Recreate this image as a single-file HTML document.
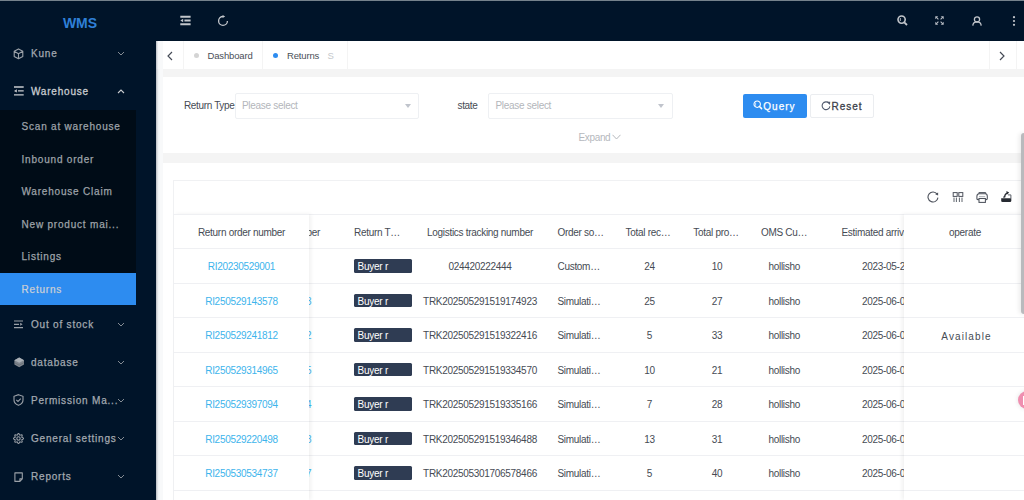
<!DOCTYPE html>
<html><head><meta charset="utf-8">
<style>
*{margin:0;padding:0;box-sizing:border-box}
html,body{width:1024px;height:500px;overflow:hidden;background:#f4f4f4;font-family:"Liberation Sans",sans-serif}
.abs{position:absolute}
#top{left:0;top:0;width:1024px;height:41px;background:#001429}
#topline{left:0;top:0;width:1024px;height:1px;background:#75828c}
#side{left:0;top:41px;width:156px;height:459px;background:#001429}
#logo{left:0;top:14px;width:160px;text-align:center;font-weight:bold;font-size:14px;color:#2f80d8;line-height:18px}
.mi{position:absolute;left:0;width:156px;height:38px;color:#a3a9b0;font-size:10px;letter-spacing:0.8px;line-height:38px;-webkit-text-stroke:0.25px #a3a9b0}
.mi .t{position:absolute;left:31px;top:0.7px}
.mi svg.ic{position:absolute;left:13px;top:13px}
.mi svg.ch{position:absolute;left:117px;top:16.7px}
#sub{left:0;top:110px;width:136px;height:195px;background:#000c17}
.si{position:absolute;left:0;width:136px;height:32.5px;line-height:32.5px;color:#9ea3a9;font-size:10px;letter-spacing:0.8px;-webkit-text-stroke:0.25px #9ea3a9}
.si .t{position:absolute;left:21.5px;top:1px}
#main{left:156px;top:41px;width:868px;height:459px;background:#f4f4f4}
#tabs{left:156px;top:41px;width:868px;height:28px;background:#fff}
.tdiv{position:absolute;top:41px;width:1px;height:28px;background:#f4f4f4}
.tt{position:absolute;top:41.5px;line-height:28px;font-size:9.5px;color:#4a4f58;letter-spacing:-0.15px}
#card1{left:163px;top:77px;width:861px;height:76px;background:#fff}
#card2{left:163px;top:163px;width:861px;height:337px;background:#fff}
.lbl{position:absolute;font-size:10px;letter-spacing:-0.35px;color:#464b54;line-height:12px}
.sel{position:absolute;top:93px;height:26px;border:1px solid #eef0f3;border-radius:2px;background:#fff}
.sel .ph{position:absolute;left:6.5px;top:0;line-height:24px;font-size:10px;letter-spacing:-0.3px;color:#b3b6bb}
.sel .car{position:absolute;top:10px;width:0;height:0;border-left:3.5px solid transparent;border-right:3.5px solid transparent;border-top:4px solid #c0c4cc}
.btn{position:absolute;top:94px;height:24px;border-radius:2px;font-size:10px;letter-spacing:1px;line-height:24px}
#tbl{left:173px;top:180px;width:851px;height:320px;border:1px solid #f0f1f3;border-right:none;border-bottom:none;background:#fff}
.hl{position:absolute;left:173px;width:851px;height:1px;background:#eff0f3}
.th{position:absolute;top:216px;line-height:34.5px;font-size:10px;letter-spacing:-0.3px;color:#464b54;white-space:nowrap}
.td{position:absolute;margin-top:1.5px;line-height:34.5px;font-size:10px;letter-spacing:-0.3px;color:#464b54;white-space:nowrap}
.lk{color:#3db4ec}
.tag{position:absolute;left:354px;width:58px;height:13.5px;background:#2f3c53;color:#fff;font-size:10px;letter-spacing:-0.25px;line-height:15.5px;padding-left:3.5px;border-radius:1.5px}
</style></head>
<body>
<div id="top" class="abs"></div>
<div id="topline" class="abs"></div>
<div id="side" class="abs"></div>
<div id="logo" class="abs">WMS</div>
<!-- header icons -->
<svg class="abs" style="left:179.5px;top:15px" width="11" height="11" viewBox="0 0 11 11">
 <path d="M0.3 1.75H10.6M4.4 5.5H10.6M0.3 9.25H10.6" stroke="#c3c7cc" stroke-width="1.8"/>
 <path d="M0.3 5.5L3.2 3.7V7.3Z" fill="#c3c7cc"/>
</svg>
<svg class="abs" style="left:216.5px;top:15px" width="12" height="12" viewBox="0 0 12 12">
 <path d="M6 1.5A4.4 4.4 0 1 0 10.4 5.9" stroke="#c3c7cc" stroke-width="1.3" fill="none"/>
 <path d="M5.6 0L8.2 1.5L5.6 3Z" fill="#c3c7cc"/>
</svg>
<svg class="abs" style="left:897px;top:15px" width="11" height="11" viewBox="0 0 11 11">
 <circle cx="4.6" cy="4.6" r="3.6" stroke="#c3c7cc" stroke-width="1.6" fill="none"/>
 <path d="M7.3 7.3L10 10" stroke="#c3c7cc" stroke-width="1.8"/>
 <path d="M3.3 3V6" stroke="#c3c7cc" stroke-width="0.9"/>
</svg>
<svg class="abs" style="left:935px;top:16px" width="9" height="9" viewBox="0 0 9 9"><path d="M3.4 3.4L1.2 1.2M5.6 3.4L7.8 1.2M3.4 5.6L1.2 7.8M5.6 5.6L7.8 7.8" stroke="#b9bec5" stroke-width="1.1"/><path d="M0.3 0.3H3.2L0.3 3.2ZM8.7 0.3H5.8L8.7 3.2ZM0.3 8.7H3.2L0.3 5.8ZM8.7 8.7H5.8L8.7 5.8Z" fill="#b9bec5"/></svg>
<svg class="abs" style="left:972px;top:16px" width="10" height="10" viewBox="0 0 10 10">
 <circle cx="5" cy="3.4" r="2.6" stroke="#c3c7cc" stroke-width="1.3" fill="none"/>
 <path d="M0.8 9.6C1 7 3 5.8 5 5.8S9 7 9.2 9.6" stroke="#c3c7cc" stroke-width="1.3" fill="none"/>
</svg>
<svg class="abs" style="left:1012px;top:16px" width="4" height="10" viewBox="0 0 4 10">
 <circle cx="2" cy="1.2" r="1.1" fill="#c3c7cc"/><circle cx="2" cy="5" r="1.1" fill="#c3c7cc"/><circle cx="2" cy="8.8" r="1.1" fill="#c3c7cc"/>
</svg>

<!-- sidebar menu -->
<div class="mi" style="top:34px">
 <svg class="ic" width="11" height="12" viewBox="0 0 11 12" style="left:12.5px;top:13.5px"><path d="M5.5 0.9L9.8 3.3V8.4L5.5 10.8L1.2 8.4V3.3Z M1.2 3.3L5.5 5.8L9.8 3.3 M5.5 5.8V10.8" stroke="#9ba1a8" stroke-width="1.1" fill="none" stroke-linejoin="round"/></svg>
 <span class="t">Kune</span>
 <svg class="ch" width="8" height="5" viewBox="0 0 8 5"><path d="M1 1L4 4L7 1" stroke="#858c94" stroke-width="1" fill="none"/></svg>
</div>
<div class="mi" style="top:72px;color:#c9ccd0;-webkit-text-stroke:0.3px #c9ccd0">
 <svg class="ic" width="11" height="10" viewBox="0 0 11 10" style="top:14px;left:13.5px"><path d="M0 1H9.7M4 4.9H9.7M0 8.8H9.7" stroke="#c9ccd0" stroke-width="1.3"/><path d="M0 4.9L2.8 3.2V6.6Z" fill="#c9ccd0"/></svg>
 <span class="t">Warehouse</span>
 <svg class="ch" width="8" height="5" viewBox="0 0 8 5" style="top:17px"><path d="M1 4L4 1L7 4" stroke="#c9ccd0" stroke-width="1.1" fill="none"/></svg>
</div>
<div id="sub" class="abs"></div>
<div class="si" style="top:110px"><span class="t">Scan at warehouse</span></div>
<div class="si" style="top:142.5px"><span class="t">Inbound order</span></div>
<div class="si" style="top:175px"><span class="t">Warehouse Claim</span></div>
<div class="si" style="top:207.5px"><span class="t">New product mai...</span></div>
<div class="si" style="top:240px"><span class="t">Listings</span></div>
<div class="si" style="top:272.5px;background:#2d8cf0;color:#e4eefb"><span class="t">Returns</span></div>

<div class="mi" style="top:305.5px">
 <svg class="ic" width="10" height="9" viewBox="0 0 10 9" style="left:14px;top:14.5px"><path d="M0 1H9M0 4.3H5M0 7.6H9" stroke="#9ba1a8" stroke-width="1.2"/><path d="M8.6 4.3L6.2 2.8V5.8Z" fill="#9ba1a8"/></svg>
 <span class="t">Out of stock</span>
 <svg class="ch" width="8" height="5" viewBox="0 0 8 5"><path d="M1 1L4 4L7 1" stroke="#858c94" stroke-width="1" fill="none"/></svg>
</div>
<div class="mi" style="top:343.5px">
 <svg class="ic" width="11" height="11" viewBox="0 0 11 11" style="top:13.5px;left:13.5px"><path d="M0.4 3.2L5.2 0.6L10 3.2V7.6L5.2 10.3L0.4 7.6Z" fill="#7f868e"/><path d="M0.4 3.2L5.2 0.6L10 3.2L5.2 5.8Z" fill="#aab0b6"/><path d="M0.4 5.6L5.2 8.2L10 5.6" stroke="#5d646c" stroke-width="0.6" fill="none"/></svg>
 <span class="t">database</span>
 <svg class="ch" width="8" height="5" viewBox="0 0 8 5"><path d="M1 1L4 4L7 1" stroke="#858c94" stroke-width="1" fill="none"/></svg>
</div>
<div class="mi" style="top:381.5px">
 <svg class="ic" width="11" height="12" viewBox="0 0 11 12" style="top:12.5px"><path d="M5.5 0.7L10 2.3V6C10 8.6 8 10.4 5.5 11.3C3 10.4 1 8.6 1 6V2.3Z" stroke="#9ba1a8" stroke-width="1.1" fill="none"/><path d="M3.3 5.8L5 7.4L7.8 4.6" stroke="#9ba1a8" stroke-width="1.1" fill="none"/></svg>
 <span class="t">Permission Ma...</span>
 <svg class="ch" width="8" height="5" viewBox="0 0 8 5"><path d="M1 1L4 4L7 1" stroke="#858c94" stroke-width="1" fill="none"/></svg>
</div>
<div class="mi" style="top:419.5px">
 <svg class="ic" width="11" height="11" viewBox="0 0 11 11" style="top:13px;left:13px"><path d="M10.55 5.50 L10.14 6.11 L9.29 6.52 L8.78 6.86 L8.90 7.46 L9.21 8.35 L9.07 9.07 L8.35 9.21 L7.46 8.90 L6.86 8.78 L6.52 9.29 L6.11 10.14 L5.50 10.55 L4.89 10.14 L4.48 9.29 L4.14 8.78 L3.54 8.90 L2.65 9.21 L1.93 9.07 L1.79 8.35 L2.10 7.46 L2.22 6.86 L1.71 6.52 L0.86 6.11 L0.45 5.50 L0.86 4.89 L1.71 4.48 L2.22 4.14 L2.10 3.54 L1.79 2.65 L1.93 1.93 L2.65 1.79 L3.54 2.10 L4.14 2.22 L4.48 1.71 L4.89 0.86 L5.50 0.45 L6.11 0.86 L6.52 1.71 L6.86 2.22 L7.46 2.10 L8.35 1.79 L9.07 1.93 L9.21 2.65 L8.90 3.54 L8.78 4.14 L9.29 4.48 L10.14 4.89Z" stroke="#9ba1a8" stroke-width="1.05" fill="none"/><circle cx="5.5" cy="5.5" r="1.7" stroke="#9ba1a8" stroke-width="1.1" fill="none"/></svg>
 <span class="t">General settings</span>
 <svg class="ch" width="8" height="5" viewBox="0 0 8 5"><path d="M1 1L4 4L7 1" stroke="#858c94" stroke-width="1" fill="none"/></svg>
</div>
<div class="mi" style="top:457.5px">
 <svg class="ic" width="10" height="11" viewBox="0 0 10 11" style="left:14px;top:14px"><path d="M0.9 0.9H8.3V6.8L5.9 9.4H0.9Z M8.3 6.8H5.9V9.4" stroke="#9ba1a8" stroke-width="1.1" fill="none" stroke-linejoin="round"/></svg>
 <span class="t">Reports</span>
 <svg class="ch" width="8" height="5" viewBox="0 0 8 5"><path d="M1 1L4 4L7 1" stroke="#858c94" stroke-width="1" fill="none"/></svg>
</div>

<!-- main -->
<div id="main" class="abs"></div>
<div id="tabs" class="abs"></div>
<div class="tdiv" style="left:183px"></div>
<div class="tdiv" style="left:262px"></div>
<div class="tdiv" style="left:347px"></div>
<div class="tdiv" style="left:988.5px"></div>
<div class="tdiv" style="left:1015.5px"></div>
<svg class="abs" style="left:166px;top:50.5px" width="8" height="10" viewBox="0 0 8 10"><path d="M6 1L2 5L6 9" stroke="#444a55" stroke-width="1.15" fill="none"/></svg>
<svg class="abs" style="left:998px;top:50.5px" width="8" height="10" viewBox="0 0 8 10"><path d="M2 1L6 5L2 9" stroke="#444a55" stroke-width="1.15" fill="none"/></svg>
<div class="abs" style="left:194px;top:52.5px;width:5px;height:5px;border-radius:50%;background:#d4d4d4"></div>
<div class="tt" style="left:207.5px">Dashboard</div>
<div class="abs" style="left:272.5px;top:52.5px;width:5px;height:5px;border-radius:50%;background:#2d8cf0"></div>
<div class="tt" style="left:287px">Returns</div>
<div class="tt" style="left:327.5px;color:#c5c8cc">S</div>

<div id="card1" class="abs"></div>
<div class="lbl" style="left:184px;top:99.5px">Return Type</div>
<div class="sel" style="left:234.5px;width:184px"><span class="ph">Please select</span><span class="car" style="left:169px"></span></div>
<div class="lbl" style="left:457.5px;top:99.5px">state</div>
<div class="sel" style="left:488px;width:185px"><span class="ph">Please select</span><span class="car" style="left:169px"></span></div>
<div class="lbl" style="left:578.5px;top:131.5px;color:#b5b8bd">Expand</div>
<svg class="abs" style="left:612px;top:134px" width="9" height="6" viewBox="0 0 9 6"><path d="M0.5 0.8L4.5 5L8.5 0.8" stroke="#b5b8bd" stroke-width="1" fill="none"/></svg>

<div class="btn" style="left:742.5px;width:64.5px;background:#2d8cf0;color:#fff">
 <svg class="abs" style="left:10.5px;top:5.8px" width="10" height="10" viewBox="0 0 10 10"><circle cx="4.2" cy="4.2" r="3.2" stroke="#fff" stroke-width="1.05" fill="none"/><path d="M6.5 6.5L8.6 8.6" stroke="#fff" stroke-width="1.5" stroke-linecap="round"/><path d="M2.6 2.6V5.8" stroke="#dfeefd" stroke-width="0.8"/></svg>
 <span class="abs" style="left:20.8px;top:0.7px;-webkit-text-stroke:0.25px #fff">Query</span>
</div>
<div class="btn" style="left:810px;width:63.5px;background:#fff;border:1px solid #ebedf0;color:#3c414a">
 <svg class="abs" style="left:10px;top:6px" width="10" height="10" viewBox="0 0 10 10"><path d="M7.9 2.1A3.9 3.9 0 1 0 8.9 5.2" stroke="#515a6e" stroke-width="1.1" fill="none"/><path d="M6 0.8L9.3 0.8L8.8 4Z" fill="#515a6e"/></svg>
 <span class="abs" style="left:20.5px;top:-0.3px;-webkit-text-stroke:0.3px #3c414a;color:#3c414a">Reset</span>
</div>

<div id="card2" class="abs"></div>
<div id="tbl" class="abs"></div>
<!-- toolbar icons -->
<svg class="abs" style="left:927px;top:191px" width="13" height="13" viewBox="0 0 13 13"><path d="M10.1 3.13A5 5 0 1 0 10.95 6.7" stroke="#4d525c" stroke-width="1.1" fill="none"/><path d="M11.1 4.6L11.1 1.5L8.2 3.3Z" fill="#4d525c"/></svg>
<svg class="abs" style="left:952px;top:191px" width="12" height="12" viewBox="0 0 12 12"><rect x="1.2" y="1.6" width="4" height="3.8" stroke="#4d525c" stroke-width="1" fill="none"/><rect x="6.8" y="1.6" width="4" height="3.8" stroke="#4d525c" stroke-width="1" fill="none"/><path d="M2 6.6V11M4.4 6.6V11M7.4 6.6V11M10 6.6V11" stroke="#4d525c" stroke-width="0.9"/></svg>
<svg class="abs" style="left:976px;top:191px" width="12" height="12" viewBox="0 0 12 12"><path d="M2.9 2.8V1.6H9.7V2.8" stroke="#4d525c" stroke-width="1" fill="none"/><path d="M2.9 8.6H1.9Q0.9 8.6 0.9 7.6V5.2Q0.9 2.8 3.3 2.8H9.3Q11.3 2.8 11.3 5.2V7.6Q11.3 8.6 10.3 8.6H9.4" stroke="#4d525c" stroke-width="1.05" fill="none"/><path d="M3 5.6H9.2" stroke="#a4a8ae" stroke-width="0.9"/><rect x="3" y="7.5" width="6.4" height="3.9" stroke="#4d525c" stroke-width="1.05" fill="#fff"/></svg>
<svg class="abs" style="left:1000px;top:189px" width="13" height="14" viewBox="0 0 13 14"><path d="M1.2 9.3H11.3V11.8Q11.3 13.1 10 13.1H2.5Q1.2 13.1 1.2 11.8Z" fill="#262a31"/><path d="M3.8 9.3V7.2M8 5.9H10.9V9.3" stroke="#5b6068" stroke-width="1" fill="none"/><path d="M4.6 8.5Q4.6 5 7.2 4" stroke="#262a31" stroke-width="1.3" fill="none"/><path d="M6.4 2L9.2 3.6L6.8 5.8Z" fill="#262a31"/></svg>

<!-- header & rows lines -->
<div class="hl" style="top:214px"></div>
<div class="hl" style="top:248px"></div>
<div class="hl" style="top:283px"></div>
<div class="hl" style="top:317px"></div>
<div class="hl" style="top:352px"></div>
<div class="hl" style="top:386px"></div>
<div class="hl" style="top:421px"></div>
<div class="hl" style="top:455px"></div>
<div class="hl" style="top:490px"></div>

<div id="rows">
<div class="th" style="left:220px;width:100px;text-align:right">order number</div>
<div class="th" style="left:354px">Return T…</div>
<div class="th" style="left:400px;width:160px;text-align:center">Logistics tracking number</div>
<div class="th" style="left:557.5px">Order so…</div>
<div class="th" style="left:608px;width:80px;text-align:center">Total rec…</div>
<div class="th" style="left:676px;width:80px;text-align:center">Total pro…</div>
<div class="th" style="left:761px">OMS Cu…</div>
<div class="th" style="left:841.5px">Estimated arrival time</div>
<div class="tag" style="top:259.25px">Buyer r</div>
<div class="td" style="top:248.5px;left:400px;width:160px;text-align:center">024420222444</div>
<div class="td" style="top:248.5px;left:557.5px">Custom…</div>
<div class="td" style="top:248.5px;left:609.5px;width:80px;text-align:center">24</div>
<div class="td" style="top:248.5px;left:677px;width:80px;text-align:center">10</div>
<div class="td" style="top:248.5px;left:768.5px">hollisho</div>
<div class="td" style="top:248.5px;left:862px">2023-05-2</div>
<div class="td lk" style="top:283.0px;left:306px">3</div>
<div class="tag" style="top:293.75px">Buyer r</div>
<div class="td" style="top:283.0px;left:400px;width:160px;text-align:center">TRK202505291519174923</div>
<div class="td" style="top:283.0px;left:557.5px">Simulati…</div>
<div class="td" style="top:283.0px;left:609.5px;width:80px;text-align:center">25</div>
<div class="td" style="top:283.0px;left:677px;width:80px;text-align:center">27</div>
<div class="td" style="top:283.0px;left:768.5px">hollisho</div>
<div class="td" style="top:283.0px;left:862px">2025-06-0</div>
<div class="td lk" style="top:317.5px;left:306px">2</div>
<div class="tag" style="top:328.25px">Buyer r</div>
<div class="td" style="top:317.5px;left:400px;width:160px;text-align:center">TRK202505291519322416</div>
<div class="td" style="top:317.5px;left:557.5px">Simulati…</div>
<div class="td" style="top:317.5px;left:609.5px;width:80px;text-align:center">5</div>
<div class="td" style="top:317.5px;left:677px;width:80px;text-align:center">33</div>
<div class="td" style="top:317.5px;left:768.5px">hollisho</div>
<div class="td" style="top:317.5px;left:862px">2025-06-0</div>
<div class="td lk" style="top:352.0px;left:306px">5</div>
<div class="tag" style="top:362.75px">Buyer r</div>
<div class="td" style="top:352.0px;left:400px;width:160px;text-align:center">TRK202505291519334570</div>
<div class="td" style="top:352.0px;left:557.5px">Simulati…</div>
<div class="td" style="top:352.0px;left:609.5px;width:80px;text-align:center">10</div>
<div class="td" style="top:352.0px;left:677px;width:80px;text-align:center">21</div>
<div class="td" style="top:352.0px;left:768.5px">hollisho</div>
<div class="td" style="top:352.0px;left:862px">2025-06-0</div>
<div class="td lk" style="top:386.5px;left:306px">4</div>
<div class="tag" style="top:397.25px">Buyer r</div>
<div class="td" style="top:386.5px;left:400px;width:160px;text-align:center">TRK202505291519335166</div>
<div class="td" style="top:386.5px;left:557.5px">Simulati…</div>
<div class="td" style="top:386.5px;left:609.5px;width:80px;text-align:center">7</div>
<div class="td" style="top:386.5px;left:677px;width:80px;text-align:center">28</div>
<div class="td" style="top:386.5px;left:768.5px">hollisho</div>
<div class="td" style="top:386.5px;left:862px">2025-06-0</div>
<div class="td lk" style="top:421.0px;left:306px">8</div>
<div class="tag" style="top:431.75px">Buyer r</div>
<div class="td" style="top:421.0px;left:400px;width:160px;text-align:center">TRK202505291519346488</div>
<div class="td" style="top:421.0px;left:557.5px">Simulati…</div>
<div class="td" style="top:421.0px;left:609.5px;width:80px;text-align:center">13</div>
<div class="td" style="top:421.0px;left:677px;width:80px;text-align:center">31</div>
<div class="td" style="top:421.0px;left:768.5px">hollisho</div>
<div class="td" style="top:421.0px;left:862px">2025-06-0</div>
<div class="td lk" style="top:455.5px;left:306px">7</div>
<div class="tag" style="top:466.25px">Buyer r</div>
<div class="td" style="top:455.5px;left:400px;width:160px;text-align:center">TRK202505301706578466</div>
<div class="td" style="top:455.5px;left:557.5px">Simulati…</div>
<div class="td" style="top:455.5px;left:609.5px;width:80px;text-align:center">5</div>
<div class="td" style="top:455.5px;left:677px;width:80px;text-align:center">40</div>
<div class="td" style="top:455.5px;left:768.5px">hollisho</div>
<div class="td" style="top:455.5px;left:862px">2025-06-0</div>
<div class="abs" style="left:174px;top:214px;width:135px;height:286px;background:#fff;box-shadow:2px 0 4px rgba(0,0,0,0.06)"></div>
<div class="abs" style="left:174px;top:214px;width:135px;height:1px;background:#eff0f3"></div>
<div class="abs" style="left:174px;top:248px;width:135px;height:1px;background:#eff0f3"></div>
<div class="abs" style="left:174px;top:283px;width:135px;height:1px;background:#eff0f3"></div>
<div class="abs" style="left:174px;top:317px;width:135px;height:1px;background:#eff0f3"></div>
<div class="abs" style="left:174px;top:352px;width:135px;height:1px;background:#eff0f3"></div>
<div class="abs" style="left:174px;top:386px;width:135px;height:1px;background:#eff0f3"></div>
<div class="abs" style="left:174px;top:421px;width:135px;height:1px;background:#eff0f3"></div>
<div class="abs" style="left:174px;top:455px;width:135px;height:1px;background:#eff0f3"></div>
<div class="abs" style="left:174px;top:490px;width:135px;height:1px;background:#eff0f3"></div>
<div class="th" style="left:174px;width:135px;text-align:center">Return order number</div>
<div class="td lk" style="top:248.5px;left:174px;width:135px;text-align:center">RI20230529001</div>
<div class="td lk" style="top:283.0px;left:174px;width:135px;text-align:center">RI250529143578</div>
<div class="td lk" style="top:317.5px;left:174px;width:135px;text-align:center">RI250529241812</div>
<div class="td lk" style="top:352.0px;left:174px;width:135px;text-align:center">RI250529314965</div>
<div class="td lk" style="top:386.5px;left:174px;width:135px;text-align:center">RI250529397094</div>
<div class="td lk" style="top:421.0px;left:174px;width:135px;text-align:center">RI250529220498</div>
<div class="td lk" style="top:455.5px;left:174px;width:135px;text-align:center">RI250530534737</div>
<div class="abs" style="left:904px;top:214px;width:120px;height:286px;background:#fff;box-shadow:-2px 0 4px rgba(0,0,0,0.06)"></div>
<div class="abs" style="left:904px;top:214px;width:120px;height:1px;background:#eff0f3"></div>
<div class="abs" style="left:904px;top:248px;width:120px;height:1px;background:#eff0f3"></div>
<div class="abs" style="left:904px;top:283px;width:120px;height:1px;background:#eff0f3"></div>
<div class="abs" style="left:904px;top:317px;width:120px;height:1px;background:#eff0f3"></div>
<div class="abs" style="left:904px;top:352px;width:120px;height:1px;background:#eff0f3"></div>
<div class="abs" style="left:904px;top:386px;width:120px;height:1px;background:#eff0f3"></div>
<div class="abs" style="left:904px;top:421px;width:120px;height:1px;background:#eff0f3"></div>
<div class="abs" style="left:904px;top:455px;width:120px;height:1px;background:#eff0f3"></div>
<div class="abs" style="left:904px;top:490px;width:120px;height:1px;background:#eff0f3"></div>
<div class="th" style="left:904px;width:122px;text-align:center">operate</div>
<div class="td" style="top:317.5px;left:905.5px;width:122px;text-align:center;letter-spacing:1.1px;font-size:10px;margin-top:2px">Available</div>
</div><!--endrows-->

<!-- right edge widgets -->
<div class="abs" style="left:1021px;top:133px;width:10px;height:181px;background:#b9babd;border-radius:3px;box-shadow:-2px 0 4px rgba(0,0,0,0.08)"></div>
<div class="abs" style="left:1018px;top:391px;width:18px;height:18px;border-radius:50%;background:#ef8fb0;box-shadow:0 0 5px rgba(0,0,0,0.12)"></div>
<div class="abs" style="left:1022.5px;top:395.5px;width:3px;height:9px;background:#fff"></div><div class="abs" style="left:1024px;top:398px;width:2px;height:1.2px;background:#ef8fb0"></div><div class="abs" style="left:1024px;top:401.5px;width:2px;height:1.2px;background:#ef8fb0"></div>
<!-- left shadow of main -->
<div class="abs" style="left:156px;top:41px;width:7px;height:459px;background:linear-gradient(to right,rgba(140,146,156,0.6),rgba(235,238,242,0.5) 30%,rgba(248,249,250,1) 60%,rgba(248,249,250,1) 100%)"></div>
</body></html>
